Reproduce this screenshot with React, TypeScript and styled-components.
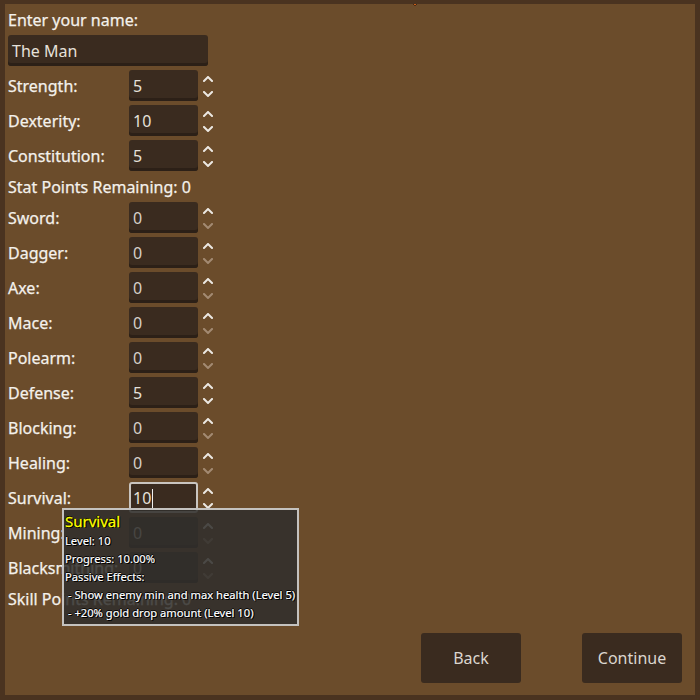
import React from "react";
import styled, { createGlobalStyle } from "styled-components";

type SpinRow = { label: string; value: number; focused?: boolean };

const stats: SpinRow[] = [
  { label: "Strength:", value: 5 },
  { label: "Dexterity:", value: 10 },
  { label: "Constitution:", value: 5 },
];

const skills: SpinRow[] = [
  { label: "Sword:", value: 0 },
  { label: "Dagger:", value: 0 },
  { label: "Axe:", value: 0 },
  { label: "Mace:", value: 0 },
  { label: "Polearm:", value: 0 },
  { label: "Defense:", value: 5 },
  { label: "Blocking:", value: 0 },
  { label: "Healing:", value: 0 },
  { label: "Survival:", value: 10, focused: true },
  { label: "Mining:", value: 0 },
  { label: "Blacksmithing:", value: 0 },
];

const tooltipLines = [
  "Level: 10",
  "Progress: 10.00%",
  "Passive Effects:",
  " - Show enemy min and max health (Level 5)",
  " - +20% gold drop amount (Level 10)",
];

const GlobalStyle = createGlobalStyle`
  html, body {
    margin: 0;
    padding: 0;
    background: #4a3320;
  }
  body {
    font-family: "Noto Sans", "Open Sans", sans-serif;
  }
`;

function Chevron({ up, dim }: { up?: boolean; dim?: boolean }) {
  return (
    <ChevronSvg viewBox="0 0 10 6" $dim={dim}>
      <path d={up ? "M1 5 5 1 9 5" : "M1 1 5 5 9 1"} />
    </ChevronSvg>
  );
}

function SpinField({ row }: { row: SpinRow }) {
  return (
    <>
      <FieldLabel>{row.label}</FieldLabel>
      <SpinWrap>
        <SpinInput $focused={row.focused} $zero={row.value === 0}>
          {row.value}
          {row.focused && <Caret />}
        </SpinInput>
        <Arrows>
          <Chevron up />
          <Chevron dim={row.value === 0} />
        </Arrows>
      </SpinWrap>
    </>
  );
}

export default function App() {
  return (
    <>
      <GlobalStyle />
      <Frame>
        <Marker viewBox="0 0 12 6">
          <path d="M1 0h10L6.5 5.5h-1Z" fill="#e8701c" stroke="#3a1c0c" strokeWidth="1" />
        </Marker>
        <Content>
          <HeadLabel>Enter your name:</HeadLabel>
          <NameInput>The Man</NameInput>
          <FormGrid>
            {stats.map((row) => (
              <SpinField key={row.label} row={row} />
            ))}
            <WideLabel>Stat Points Remaining: 0</WideLabel>
            {skills.map((row) => (
              <SpinField key={row.label} row={row} />
            ))}
            <WideLabel>Skill Points Remaining: 0</WideLabel>
          </FormGrid>
          <ButtonRow>
            <ActionButton>Back</ActionButton>
            <ActionButton>Continue</ActionButton>
          </ButtonRow>
        </Content>
        <Tooltip>
          <TooltipTitle>Survival</TooltipTitle>
          {tooltipLines.map((line) => (
            <TooltipLine key={line}>{line}</TooltipLine>
          ))}
        </Tooltip>
      </Frame>
    </>
  );
}

const Frame = styled.div`
  position: relative;
  box-sizing: border-box;
  width: 700px;
  height: 700px;
  border: 5px solid #4a3320;
  border-top-width: 4px;
  background: #6b4c2b;
  overflow: hidden;
`;

const Marker = styled.svg`
  position: absolute;
  top: -4px;
  left: 404px;
  width: 12px;
  height: 6px;
`;

const Content = styled.div`
  box-sizing: border-box;
  height: 100%;
  display: flex;
  flex-direction: column;
  gap: 4px;
  padding: 4px 3px 0;
`;

const FieldLabel = styled.div`
  box-sizing: border-box;
  height: 23px;
  padding-top: 1px;
  line-height: 23px;
  font-size: 16px;
  color: #f4f1ec;
  -webkit-text-stroke: 0.25px #f4f1ec;
  white-space: nowrap;
  align-self: center;
`;

const HeadLabel = styled(FieldLabel)`
  align-self: flex-start;
`;

const WideLabel = styled(FieldLabel)`
  grid-column: 1 / -1;
`;

const InputBox = styled.div`
  box-sizing: border-box;
  height: 31px;
  padding-top: 2px;
  line-height: 29px;
  font-size: 16px;
  color: #e6e1da;
  background: #3a2b1f;
  border-radius: 3px;
  box-shadow: inset 0 -3px 0 #2c2017;
`;

const NameInput = styled(InputBox)`
  width: 200px;
  padding-left: 4px;
`;

const FormGrid = styled.div`
  display: grid;
  grid-template-columns: 117px auto;
  justify-content: start;
  column-gap: 4px;
  row-gap: 4px;
`;

const SpinWrap = styled.div`
  display: flex;
  align-items: center;
  gap: 5px;
`;

const SpinInput = styled(InputBox)<{ $focused?: boolean; $zero?: boolean }>`
  position: relative;
  width: 69px;
  padding-left: 4px;
  color: ${({ $zero }) => ($zero ? "#d6d0c9" : "#e6e1da")};
  ${({ $focused }) =>
    $focused &&
    `
    border: 2px solid #c9c5c0;
    padding-left: 2px;
    padding-top: 0;
    line-height: 28px;
    box-shadow: none;
  `}
`;

const Caret = styled.span`
  display: inline-block;
  width: 1px;
  height: 19px;
  margin-left: 1px;
  vertical-align: -4px;
  background: #f0f0f0;
`;

const Arrows = styled.div`
  display: flex;
  flex-direction: column;
  gap: 9px;
  padding-top: 1px;
`;

const ChevronSvg = styled.svg<{ $dim?: boolean }>`
  width: 10px;
  height: 6px;
  fill: none;
  stroke: ${({ $dim }) => ($dim ? "#a38a72" : "#ece8e2")};
  stroke-width: 2;
  stroke-linecap: square;
`;

const ButtonRow = styled.div`
  margin-top: auto;
  display: flex;
  justify-content: flex-end;
  gap: 61px;
  padding: 0 10px 12px 0;
`;

const ActionButton = styled.button`
  width: 100px;
  height: 50px;
  border: none;
  border-radius: 3px;
  background: #3a2b1f;
  color: #dcd6cf;
  font-family: "Noto Sans", "Open Sans", sans-serif;
  font-size: 16px;
  padding: 0;
`;

const Tooltip = styled.div`
  position: absolute;
  left: 57px;
  top: 504px;
  box-sizing: border-box;
  width: 237px;
  height: 118px;
  padding: 0 0 0 1px;
  border: 2px solid #c4c2bf;
  background: rgba(48, 46, 44, 0.86);
  color: #ffffff;
  text-shadow: 1px 1px 0 #000, -1px 0 0 #000, 0 -1px 0 #000, 1px 0 0 #000;
`;

const TooltipTitle = styled.div`
  height: 22px;
  line-height: 22px;
  font-size: 15px;
  color: #ffff00;
  -webkit-text-stroke: 0.3px #ffff00;
`;

const TooltipLine = styled.div`
  height: 18px;
  line-height: 18px;
  font-size: 11.2px;
  -webkit-text-stroke: 0.2px #ffffff;
  white-space: pre;
`;
